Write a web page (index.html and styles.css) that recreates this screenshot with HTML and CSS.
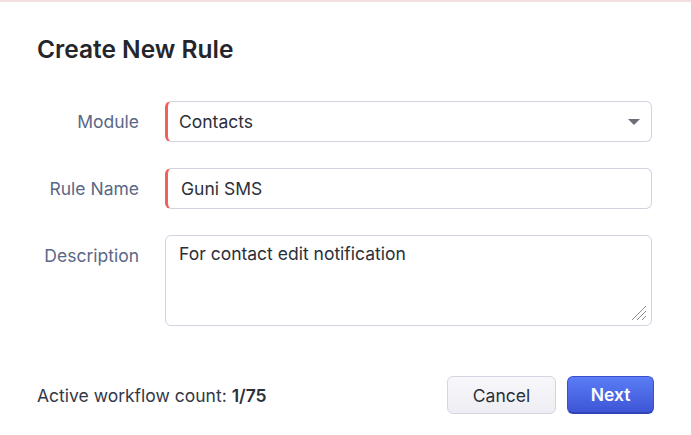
FILE: index.html
```html
<!DOCTYPE html>
<html>
<head>
<meta charset="utf-8">
<link rel="stylesheet" href="styles.css">
</head>
<body>
<div class="modal">
  <h1 class="title">Create New Rule</h1>
  <div class="form">
    <label class="label">Module</label>
    <div class="field select required">
      <span class="value">Contacts</span>
      <span class="caret"></span>
    </div>
    <label class="label">Rule Name</label>
    <div class="field required">
      <span class="value name">Guni SMS</span>
    </div>
    <label class="label label-top">Description</label>
    <div class="field textarea">
      <span class="value">For contact edit notification</span>
      <svg class="grip" width="16" height="16" viewBox="0 0 16 16">
        <line x1="1" y1="15" x2="15" y2="1" stroke="#8e8e9a" stroke-width="1"/>
        <line x1="6" y1="15" x2="15" y2="6" stroke="#8e8e9a" stroke-width="1"/>
        <line x1="11" y1="15" x2="15" y2="11" stroke="#8e8e9a" stroke-width="1"/>
      </svg>
    </div>
  </div>
  <div class="footer">
    <div class="count">Active workflow count: <b>1/75</b></div>
    <div class="actions">
      <button class="btn cancel">Cancel</button>
      <button class="btn next">Next</button>
    </div>
  </div>
</div>
</body>
</html>
```

FILE: styles.css
```css
* { box-sizing: border-box; }
html, body {
  margin: 0;
  padding: 0;
  background: #ffffff;
  font-family: Inter, "Noto Sans", "Liberation Sans", sans-serif;
}
.modal {
  width: 691px;
  height: 435px;
  border-top: 2px solid #f3dfe0;
  padding: 0 37px 0 37px;
}
.title {
  margin: 0;
  padding-top: 33px;
  font-size: 24.5px;
  line-height: 28px;
  font-weight: 600;
  color: #24262b;
}
.form {
  margin-top: 38px;
  display: grid;
  grid-template-columns: 102px 487px;
  column-gap: 26px;
  row-gap: 26px;
}
.label {
  font-size: 17.5px;
  color: #5a6886;
  text-align: right;
  align-self: center;
  white-space: nowrap;
}
.label-top {
  align-self: start;
  padding-top: 10px;
}
.field {
  height: 41px;
  border: 1px solid #d2d2e0;
  border-radius: 6px;
  display: flex;
  align-items: center;
  padding-left: 11px;
  padding-right: 11px;
  font-size: 17.5px;
  color: #2b2f3a;
  position: relative;
}
.required {
  border-left: 3px solid #f2605c;
}
.select { justify-content: space-between; }
.name { padding-left: 2px; }
.caret {
  width: 0;
  height: 0;
  border-left: 6px solid transparent;
  border-right: 6px solid transparent;
  border-top: 6px solid #6e6e78;
}
.textarea {
  height: 91px;
  align-items: flex-start;
  padding-top: 7px;
  padding-left: 13px;
}
.grip {
  position: absolute;
  right: 4px;
  bottom: 4px;
}
.footer {
  margin-top: 50px;
  display: flex;
  justify-content: space-between;
  align-items: center;
}
.count {
  font-size: 17.5px;
  color: #333846;
}
.count b { font-weight: 600; color: #2b2f3a; }
.actions {
  display: flex;
  gap: 11px;
}
.btn {
  height: 38px;
  border-radius: 6px;
  font-family: Inter, "Noto Sans", "Liberation Sans", sans-serif;
  font-size: 17.5px;
  cursor: pointer;
}
.cancel {
  width: 109px;
  background: linear-gradient(#f8f8fb, #ededf3);
  border: 1px solid #d3d5e0;
  color: #2b2f3a;
}
.next {
  width: 87px;
  background: linear-gradient(#5b7df6, #3d55d6);
  border: 1px solid #3a50cc;
  border-bottom: 2px solid #2f43b5;
  color: #ffffff;
  font-weight: 600;
}
```
